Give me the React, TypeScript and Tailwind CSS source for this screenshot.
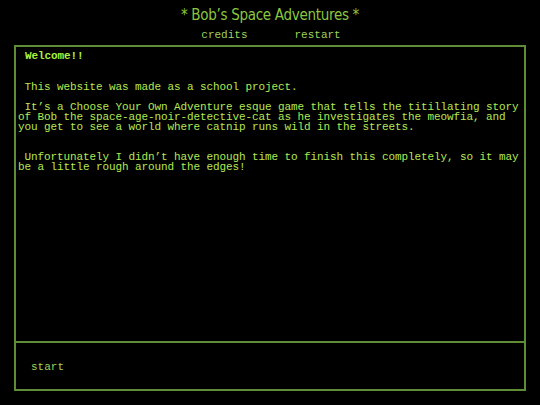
const paragraphs = [
  " This website was made as a school project.",
  " It\u2019s a Choose Your Own Adventure esque game that tells the titillating story of Bob the space-age-noir-detective-cat as he investigates the meowfia, and you get to see a world where catnip runs wild in the streets.",
  "\n Unfortunately I didn\u2019t have enough time to finish this completely, so it may be a little rough around the edges!",
];

const mono = { fontFamily: '"Liberation Mono", "DejaVu Sans Mono", monospace' };

export default function App() {
  return (
    <div className="w-[540px] h-[405px] bg-black flex flex-col overflow-hidden" style={mono}>
      {/* header */}
      <header className="h-[45px] flex flex-col items-center">
        <h1
          className="mt-[5px] text-[15px] leading-[20px] text-[#8cc63f] tracking-[-0.3px]"
          style={{ fontFamily: '"DejaVu Sans Condensed", "DejaVu Sans", sans-serif', fontStretch: "condensed" }}
        >
          * Bob&rsquo;s Space Adventures *
        </h1>
        <nav className="mt-[3px] flex gap-[47px] text-[11px] leading-[14px] text-[#9fd35a] pl-[2px]">
          <a className="cursor-pointer">credits</a>
          <a className="cursor-pointer">restart</a>
        </nav>
      </header>

      {/* story box */}
      <main className="mx-[14px] w-[512px] h-[346px] border-2 border-[#5f8d34] flex flex-col">
        <section className="flex-1 pl-[2px] pr-0 pt-[3px] text-[11px] leading-[10px] tracking-[-0.1px] text-[#b5e853]">
          <h2 className="pl-[7px] mb-[20px] font-bold text-[#a9f23c] leading-[12px]">Welcome!!</h2>
          {paragraphs.map((p, i) => (
            <p key={i} className="whitespace-pre-wrap mb-[10px]">
              {p}
            </p>
          ))}
        </section>
        <footer className="h-[48px] border-t-2 border-[#5f8d34] flex items-center pl-[15px] pt-[3px]">
          <button className="text-[11px] text-[#9fd35a] cursor-pointer">start</button>
        </footer>
      </main>
    </div>
  );
}
